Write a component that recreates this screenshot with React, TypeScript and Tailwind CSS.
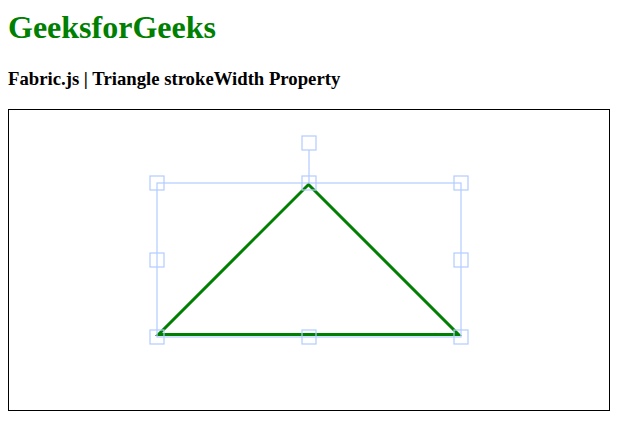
import React from 'react';

const BOX = '#b2ccff';

// bounding box of the selected triangle, in canvas coordinates
const L = 148;
const R = 452;
const T = 73;
const B = 227;
const MX = 300;
const MY = 150;

// fabric-style selection controls: hollow squares on the bounding box
const controls: [number, number][] = [
  [L, T],
  [MX, T],
  [R, T],
  [L, MY],
  [R, MY],
  [L, B],
  [MX, B],
  [R, B],
  [MX, T - 40],
];

const TriangleCanvas: React.FC = () => (
  <div className="w-[602px] h-[302px] border border-black bg-white">
    <svg width={600} height={300} viewBox="0 0 600 300" className="block">
      <polygon
        points="299.5,74.5 449.5,224.5 149.5,224.5"
        fill="none"
        stroke="#008000"
        strokeWidth={3}
        strokeLinejoin="miter"
        strokeMiterlimit={4}
      />
      <rect x={L} y={T} width={R - L} height={B - T} fill="none" stroke={BOX} strokeWidth={1.2} />
      <line x1={MX} y1={T - 33} x2={MX} y2={T} stroke={BOX} strokeWidth={1.2} />
      {controls.map(([cx, cy], i) => (
        <rect
          key={i}
          x={cx - 7}
          y={cy - 7}
          width={14}
          height={14}
          fill="none"
          stroke={BOX}
          strokeWidth={1.2}
        />
      ))}
    </svg>
  </div>
);

export default function App() {
  return (
    <div className="min-h-screen bg-white px-2 font-['Liberation_Serif','Times_New_Roman',serif]">
      <h1 className="pt-[9px] text-[32px] leading-[37px] font-bold text-[#008000]">GeeksforGeeks</h1>
      <h3 className="mt-[21.5px] text-[18.72px] leading-[22px] font-bold text-black">
        Fabric.js | Triangle strokeWidth Property
      </h3>
      <div className="mt-[19.4px]">
        <TriangleCanvas />
      </div>
    </div>
  );
}
